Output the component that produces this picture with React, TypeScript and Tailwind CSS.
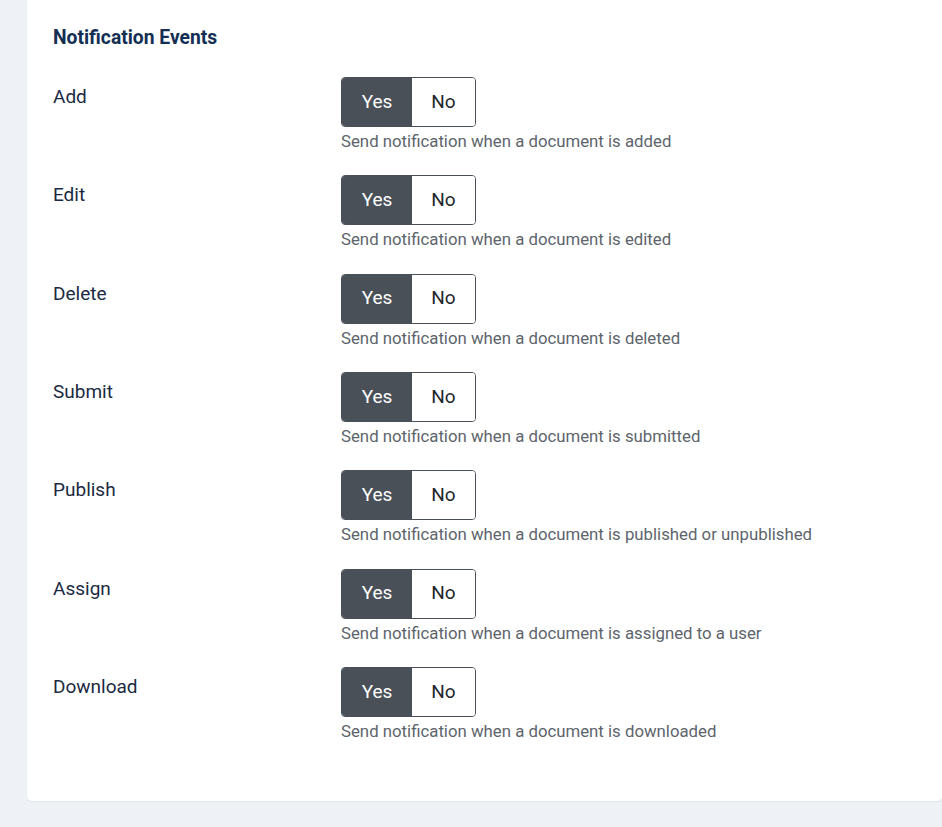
import { useState } from 'react';

const events = [
  { label: 'Add', desc: 'Send notification when a document is added' },
  { label: 'Edit', desc: 'Send notification when a document is edited' },
  { label: 'Delete', desc: 'Send notification when a document is deleted' },
  { label: 'Submit', desc: 'Send notification when a document is submitted' },
  { label: 'Publish', desc: 'Send notification when a document is published or unpublished' },
  { label: 'Assign', desc: 'Send notification when a document is assigned to a user' },
  { label: 'Download', desc: 'Send notification when a document is downloaded' },
];

function YesNo({ value, onChange }: { value: boolean; onChange: (v: boolean) => void }) {
  return (
    <div className="flex h-[50px] w-[135px] rounded-[4px] border border-[#495057] overflow-hidden">
      <button
        onClick={() => onChange(true)}
        className={
          value
            ? 'w-[70px] bg-[#495057] text-white text-[19px]'
            : 'w-[70px] bg-white text-[#22262a] text-[19px]'
        }
      >
        Yes
      </button>
      <button
        onClick={() => onChange(false)}
        className={
          !value
            ? 'flex-1 bg-[#495057] text-white text-[19px]'
            : 'flex-1 bg-white text-[#22262a] text-[19px]'
        }
      >
        No
      </button>
    </div>
  );
}

export default function App() {
  const [values, setValues] = useState<boolean[]>(events.map(() => true));

  return (
    <div
      className="min-h-[827px] bg-[#eef2f6] pl-[27px]"
      style={{ fontFamily: 'Roboto, "Liberation Sans", sans-serif' }}
    >
      <div className="h-[801px] bg-white rounded-b-[5px] shadow-[0_1px_2px_rgba(0,0,0,0.06)] pl-[26px] pt-[24px]">
        <h3 className="text-[19.3px] leading-[27px] font-bold text-[#132f53]">Notification Events</h3>
        <div className="mt-[26px] flex flex-col gap-[21.33px]">
          {events.map((ev, i) => (
            <div key={ev.label} className="flex">
              <div className="w-[288px] pt-[6px] text-[19px] leading-[27px] text-[#1b2a42]">{ev.label}</div>
              <div>
                <YesNo
                  value={values[i]}
                  onChange={(v) => setValues(values.map((x, j) => (j === i ? v : x)))}
                />
                <div className="mt-[2px] text-[16.8px] leading-[25px] text-[#5d646c]">{ev.desc}</div>
              </div>
            </div>
          ))}
        </div>
      </div>
    </div>
  );
}
